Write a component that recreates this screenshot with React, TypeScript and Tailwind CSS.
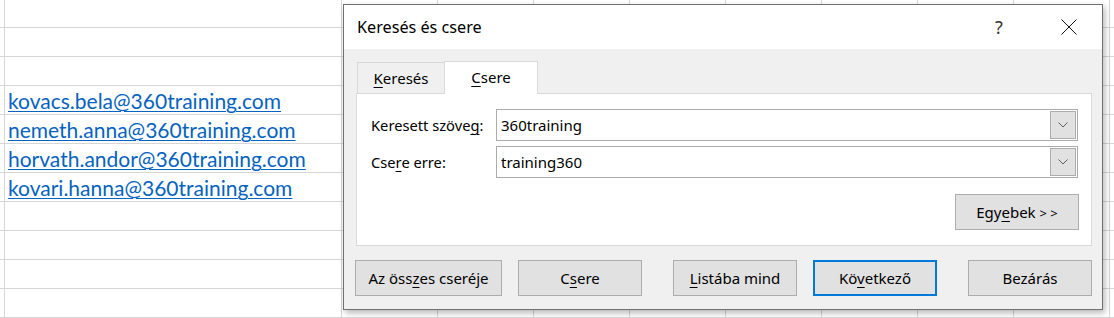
import React from "react";

const U = ({ children }: { children: React.ReactNode }) => (
  <span className="underline underline-offset-[3px] decoration-1">{children}</span>
);

const Chevron = () => (
  <svg width="10" height="6" viewBox="0 0 10 6" className="block">
    <path d="M0.5 0.5 L5 5 L9.5 0.5" fill="none" stroke="#606060" strokeWidth="1" />
  </svg>
);

const Btn = ({
  w,
  children,
  primary,
  className = "",
}: {
  w: string;
  children: React.ReactNode;
  primary?: boolean;
  className?: string;
}) => (
  <div
    className={`${w} h-[36px] flex items-center justify-center bg-[#e1e1e1] text-[15px] text-black ${
      primary ? "border-2 border-[#0078d7]" : "border border-[#adadad]"
    } ${className}`}
  >
    {children}
  </div>
);

const Combo = ({ value }: { value: string }) => (
  <div className="w-[582px] h-[32px] border border-[#ababab] bg-white flex items-center">
    <div className="flex-1 pl-[4px] text-[15px] text-black leading-none">{value}</div>
    <div className="w-[26px] h-[28px] mr-[1px] border border-[#acacac] bg-[#e1e1e1] flex items-center justify-center">
      <Chevron />
    </div>
  </div>
);

const links = [
  "kovacs.bela@360training.com",
  "nemeth.anna@360training.com",
  "horvath.andor@360training.com",
  "kovari.hanna@360training.com",
];

export default function App() {
  const rows = Array.from({ length: 11 });
  const cols = Array.from({ length: 8 });
  return (
    <div className="relative w-[1114px] h-[318px] overflow-hidden bg-white">
      {/* spreadsheet */}
      <div className="flex flex-col">
        {rows.map((_, r) => (
          <div
            key={r}
            className={`flex border-b border-[#d6d6d6] ${r === 0 ? "h-[28px]" : "h-[29px]"}`}
          >
            <div className="w-[5px] shrink-0 border-r border-[#d6d6d6]" />
            <div className="w-[337px] shrink-0 border-r border-[#d6d6d6] flex items-end pl-[3px] pb-[3px]">
              {r >= 3 && r <= 6 && (
                <span
                  className="text-[#0563c1] underline decoration-1 underline-offset-[2px] text-[21px] leading-none whitespace-nowrap"
                  style={{ fontFamily: "Lato, 'Open Sans', sans-serif" }}
                >
                  {links[r - 3]}
                </span>
              )}
            </div>
            {cols.map((__, c) => (
              <div key={c} className="w-[96px] shrink-0 border-r border-[#d6d6d6]" />
            ))}
          </div>
        ))}
      </div>

      {/* dialog window */}
      <div
        className="absolute left-[343px] top-[4px] w-[760px] h-[306px] border border-[#707070] bg-[#f0f0f0] shadow-[2px_3px_6px_rgba(0,0,0,0.28)] flex flex-col"
        style={{ fontFamily: "'Noto Sans', 'Open Sans', sans-serif" }}
      >
        {/* title bar */}
        <div className="h-[44px] bg-white flex items-center pl-[13px] shrink-0">
          <div className="text-[16.2px] text-black flex-1 leading-none">Keresés és csere</div>
          <div className="w-[14px] text-[18px] text-[#333] leading-none mr-[52px]">?</div>
          <svg width="16" height="16" viewBox="0 0 16 16" className="mr-[25px]">
            <path d="M0.5 0.5 L15.5 15.5 M15.5 0.5 L0.5 15.5" stroke="#111" strokeWidth="1" />
          </svg>
        </div>

        {/* body */}
        <div className="flex-1 flex flex-col pt-[11px] pl-[12px] pr-[10px]">
          {/* tabs */}
          <div className="flex items-end h-[33px]">
            <div className="w-[87px] h-[31px] ml-[1px] border-t border-l border-[#d9d9d9] flex items-center justify-center text-[15px] text-black">
              <span>
                <U>K</U>eresés
              </span>
            </div>
            <div className="w-[94px] h-[33px] bg-white border-t border-l border-r border-[#d9d9d9] flex items-center justify-center text-[15px] text-black relative z-10 -mb-[1px] pb-[1px]">
              <span>
                <U>C</U>sere
              </span>
            </div>
          </div>
          {/* panel */}
          <div className="h-[153px] bg-white border border-[#d9d9d9] flex flex-col pt-[15px] pl-[14px] pr-[12px]">
            <div className="flex items-center">
              <div className="w-[125px] text-[14.7px] text-black">
                Keresett szöve<U>g</U>:
              </div>
              <Combo value="360training" />
            </div>
            <div className="flex items-center mt-[5px]">
              <div className="w-[125px] text-[14.7px] text-black">
                Cse<U>r</U>e erre:
              </div>
              <Combo value="training360" />
            </div>
            <div className="flex justify-end mt-[16px]">
              <Btn w="w-[124px]">
                <span>
                  Egy<U>e</U>bek <span className="text-[13px]">&gt; &gt;</span>
                </span>
              </Btn>
            </div>
          </div>
          {/* buttons */}
          <div className="flex mt-[14px] -ml-[1px]">
            <Btn w="w-[147px]">
              <span>
                Az öss<U>z</U>es cseréje
              </span>
            </Btn>
            <Btn w="w-[124px]" className="ml-[16px]">
              <span>
                C<U>s</U>ere
              </span>
            </Btn>
            <Btn w="w-[124px]" className="ml-[31px]">
              <span>
                <U>L</U>istába mind
              </span>
            </Btn>
            <Btn w="w-[124px]" className="ml-[16px]" primary>
              <span>
                Kö<U>v</U>etkező
              </span>
            </Btn>
            <Btn w="w-[124px]" className="ml-[31px]">
              <span>Bezárás</span>
            </Btn>
          </div>
        </div>
      </div>
    </div>
  );
}
